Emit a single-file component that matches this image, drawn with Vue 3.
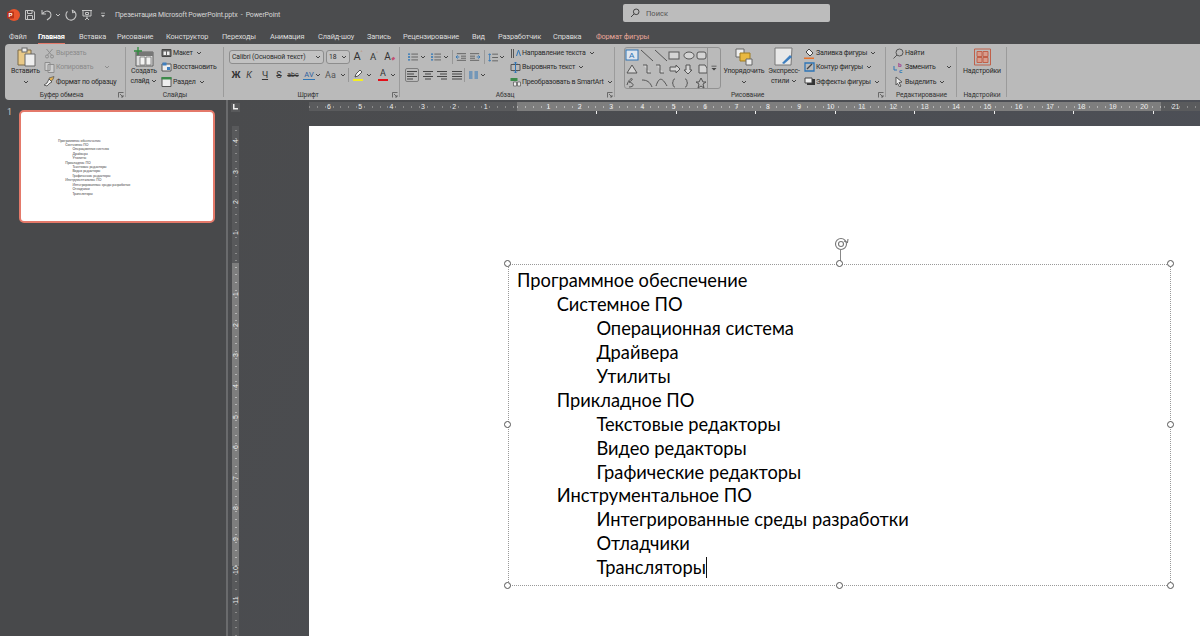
<script setup>
const tabs = [
  { t: 'Файл', w: 29 }, { t: 'Главная', w: 41, on: true }, { t: 'Вставка', w: 38 }, { t: 'Рисование', w: 49 },
  { t: 'Конструктор', w: 56 }, { t: 'Переходы', w: 48 }, { t: 'Анимация', w: 48 }, { t: 'Слайд-шоу', w: 49 },
  { t: 'Запись', w: 36 }, { t: 'Рецензирование', w: 69 }, { t: 'Вид', w: 26 }, { t: 'Разработчик', w: 55 },
  { t: 'Справка', w: 43 }, { t: 'Формат фигуры', w: 70, fmt: true }
]
const lines = [
  [0, 'Программное обеспечение'], [1, 'Системное ПО'], [2, 'Операционная система'], [2, 'Драйвера'], [2, 'Утилиты'],
  [1, 'Прикладное ПО'], [2, 'Текстовые редакторы'], [2, 'Видео редакторы'], [2, 'Графические редакторы'],
  [1, 'Инструментальное ПО'], [2, 'Интегрированные среды разработки'], [2, 'Отладчики'], [2, 'Трансляторы']
]
const hNums = []
for (let i = -6; i <= 21; i++) if (i !== 0) hNums.push({ n: Math.abs(i), x: 208 + i * 31.36 })
const tabStops = [288, 368, 447, 527, 606, 686, 765, 845]
const vNums = []
for (let i = -4; i <= 11; i++) if (i !== 0) vNums.push({ n: Math.abs(i), y: 137.5 + i * 30.6 })
const handles = [
  [0, 0], [50, 0], [100, 0], [0, 50], [100, 50], [0, 100], [50, 100], [100, 100]
]
const pct = v => v + '%'
</script>

<template>
  <div class="app">
    <header class="title">
      <svg class="qa logo" width="14" height="14" viewBox="0 0 14 14"><circle cx="8" cy="7" r="6" fill="#e8552d"/><rect x="1" y="3.5" width="7" height="7" rx="1" fill="#b7321a"/><text x="2.6" y="9.3" font-size="6" font-weight="700" fill="#fff" font-family="Liberation Sans">P</text></svg>
      <svg class="qa" width="12" height="12" viewBox="0 0 12 12" fill="none" stroke="#c4c4c4"><path d="M1.5 1.5h7.5l1.5 1.5v7.5h-9z M3.5 1.5v3h4.5v-3 M3.5 10.5v-4h5v4"/></svg>
      <svg class="qa" width="13" height="12" viewBox="0 0 13 12" fill="none" stroke="#c4c4c4" stroke-width="1.1"><path d="M2 1v4h4 M2.3 5C4 2.4 7 1.6 9 2.6c2.4 1.2 2.6 4.6.6 6.4L7 11"/></svg>
      <svg class="qa chev" width="6" height="4" viewBox="0 0 6 4" fill="none" stroke="#c4c4c4"><path d="M1 1l2 2 2-2"/></svg>
      <svg class="qa" width="12" height="12" viewBox="0 0 12 12" fill="none" stroke="#c4c4c4" stroke-width="1.1"><path d="M8 1.5A5 5 0 1 1 3 2 M8 1v3h3" transform="rotate(-8 6 6)"/></svg>
      <svg class="qa" width="12" height="12" viewBox="0 0 12 12" fill="none" stroke="#c4c4c4"><path d="M1 1.5h10 M2 1.5v5.5h8v-5.5 M6 7v2 M4 11l2-2 2 2 M4.5 3.500h3v2h-3z"/></svg>
      <svg class="qa qat" width="6" height="6" viewBox="0 0 6 6" fill="#c4c4c4"><path d="M1 .8h4v.8h-4z M1 3h4L3 5.200z"/></svg>
      <span class="doc">Презентация Microsoft PowerPoint.pptx&nbsp; -&nbsp; PowerPoint</span>
      <div class="search">
        <svg width="10" height="10" viewBox="0 0 10 10" fill="none" stroke="#444"><circle cx="6.200" cy="3.800" r="2.800"/><path d="M4.200 5.800L1 9"/></svg>
        <span>Поиск</span>
      </div>
    </header>

    <nav class="tabs">
      <span v-for="tab in tabs" :key="tab.t" class="tab" :class="{ on: tab.on, fmt: tab.fmt }" :style="{ width: tab.w + 'px' }"><i>{{ tab.t }}</i></span>
    </nav>

    <section class="ribbon">
      <!-- clipboard -->
      <div class="group g1">
        <div class="body">
          <div class="big clip">
            <svg width="20" height="20" viewBox="0 0 20 20"><path d="M2 3h13v15H2z" fill="#e9c987" stroke="#7a6a4a"/><rect x="6" y="1" width="5" height="4" fill="#eee" stroke="#666"/><path d="M9 7h10v12H9z" fill="#eee" stroke="#666"/></svg>
            <span class="bl">Вставить</span>
            <svg class="bc" width="6" height="4" viewBox="0 0 6 4" fill="none" stroke="#444"><path d="M1 1l2 2 2-2"/></svg>
          </div>
          <div class="col">
            <div class="row dis"><svg width="10" height="11" viewBox="0 0 10 11" fill="none" stroke="#8d8d8d"><path d="M2 1l5 6 M8 1L3 7"/><circle cx="2.500" cy="8.500" r="1.500"/><circle cx="7.500" cy="8.500" r="1.500"/></svg><span>Вырезать</span></div>
            <div class="row dis"><svg width="10" height="11" viewBox="0 0 10 11" fill="#cfcfcf" stroke="#8d8d8d"><path d="M.5 .5h5v8h-5z M3.500 2.500h6v8h-6z"/></svg><span>Копировать</span><svg class="ch wide" width="6" height="4" viewBox="0 0 6 4" fill="none" stroke="#8d8d8d"><path d="M1 1l2 2 2-2"/></svg></div>
            <div class="row"><svg width="11" height="11" viewBox="0 0 11 11"><path d="M5 2l5-1.500-1 3L6 6z" fill="#e3b050" stroke="#555" stroke-width=".7"/><path d="M5 3l3 3-2 1-3 3-3-1 3-2z" fill="#f2f2f2" stroke="#444" stroke-width=".8"/></svg><span>Формат по образцу</span></div>
          </div>
        </div>
        <div class="glabel lab-c">Буфер обмена<svg class="launch" width="6" height="6" viewBox="0 0 6 6" fill="none" stroke="#555" stroke-width=".8"><path d="M.5 5.500v-5h5 M2 2l3 3 M5 3v2h-2"/></svg></div>
      </div>
      <!-- slides -->
      <div class="group g2">
        <div class="body">
          <div class="big newslide">
            <svg width="20" height="20" viewBox="0 0 20 20"><path d="M2 5h17v14H2z" fill="#dedede" stroke="#5e5e5e"/><path d="M2 5h17v4H2z" fill="#777"/><path d="M6 10h5v8H6z M12 10h5v8h-5z" fill="#f2f2f2" stroke="#666" stroke-width=".7"/><path d="M4 0v8 M0 4h8" stroke="#2e8b3d" stroke-width="1.300"/></svg>
            <span class="bl">Создать</span>
            <span class="bl">слайд<svg class="ch in" width="6" height="4" viewBox="0 0 6 4" fill="none" stroke="#444"><path d="M1 1l2 2 2-2"/></svg></span>
          </div>
          <div class="col">
            <div class="row"><svg width="10" height="10" viewBox="0 0 10 10"><path d="M.5 1.500h9v7h-9z" fill="#666" stroke="#444"/><path d="M2 3.500h2.500v3.500H2z M5.500 3.500H8v3.500H5.500z" fill="#eee"/></svg><span>Макет</span><svg class="ch in" width="6" height="4" viewBox="0 0 6 4" fill="none" stroke="#444"><path d="M1 1l2 2 2-2"/></svg></div>
            <div class="row"><svg width="10" height="10" viewBox="0 0 10 10"><path d="M.5 2h9v7h-9z" fill="#eee" stroke="#555"/><path d="M1 .5h4v3H1z" fill="#3f7fbf"/><path d="M5.500 5h3v3h-3z" fill="#3f7fbf"/></svg><span>Восстановить</span></div>
            <div class="row"><svg width="10" height="10" viewBox="0 0 10 10"><path d="M.5 .5h9v9h-9z" fill="#eee" stroke="#555"/><path d="M0 0h10v2.500H0z" fill="#3c8a4a"/></svg><span>Раздел</span><svg class="ch in" width="6" height="4" viewBox="0 0 6 4" fill="none" stroke="#444"><path d="M1 1l2 2 2-2"/></svg></div>
          </div>
        </div>
        <div class="glabel">Слайды</div>
      </div>
      <!-- font -->
      <div class="group g3">
        <div class="stack">
          <div class="frow r1">
            <div class="combo fname"><span>Calibri (Основной текст)</span><svg width="6" height="4" viewBox="0 0 6 4" fill="none" stroke="#444"><path d="M1 1l2 2 2-2"/></svg></div>
            <div class="combo fsize"><span>18</span><svg width="6" height="4" viewBox="0 0 6 4" fill="none" stroke="#444"><path d="M1 1l2 2 2-2"/></svg></div>
            <b class="gl grow">A<sup>˄</sup></b>
            <b class="gl shrink">A<sup>˅</sup></b>
            <b class="gl clear">A<em class="era">◆</em></b>
          </div>
          <div class="frow r2">
            <b class="gl w-zh">Ж</b>
            <b class="gl ital w-k">К</b>
            <b class="gl und w-ch">Ч</b>
            <b class="gl str w-s">S</b>
            <b class="gl str small w-abc">abc</b>
            <b class="gl av">AV</b>
            <svg class="ch" width="6" height="4" viewBox="0 0 6 4" fill="none" stroke="#444"><path d="M1 1l2 2 2-2"/></svg>
            <b class="gl aa">Aa</b>
            <svg class="ch" width="6" height="4" viewBox="0 0 6 4" fill="none" stroke="#444"><path d="M1 1l2 2 2-2"/></svg>
            <i class="vsep sp-a"></i>
            <span class="hl hl1"><svg width="10" height="9" viewBox="0 0 10 9"><path d="M2 8l1-3 4-4 2 2-4 4z" fill="#f6f6f6" stroke="#333" stroke-width=".8"/></svg><i class="yellow"></i></span>
            <svg class="ch ml3" width="6" height="4" viewBox="0 0 6 4" fill="none" stroke="#444"><path d="M1 1l2 2 2-2"/></svg>
            <span class="hl hl2"><b class="gl fontA">A</b><i class="red"></i></span>
            <svg class="ch ml2" width="6" height="4" viewBox="0 0 6 4" fill="none" stroke="#444"><path d="M1 1l2 2 2-2"/></svg>
          </div>
        </div>
        <div class="glabel lab-f">Шрифт<svg class="launch" width="6" height="6" viewBox="0 0 6 6" fill="none" stroke="#555" stroke-width=".8"><path d="M.5 5.500v-5h5 M2 2l3 3 M5 3v2h-2"/></svg></div>
      </div>
      <!-- paragraph -->
      <div class="group g4">
        <div class="body">
          <div class="pstack">
            <div class="prow p1">
              <svg class="ml3" width="10" height="10" viewBox="0 0 12 10" stroke="#555"><path d="M4 1.500h8 M4 5h8 M4 8.500h8"/><path d="M0 1.500h2.500 M0 5h2.500 M0 8.500h2.500" stroke="#2e75b6" stroke-width="1.600"/></svg>
              <svg class="ch ml2" width="6" height="4" viewBox="0 0 6 4" fill="none" stroke="#444"><path d="M1 1l2 2 2-2"/></svg>
              <svg class="ml5" width="10" height="10" viewBox="0 0 12 10" stroke="#555"><path d="M4 1.500h8 M4 5h8 M4 8.500h8"/><path d="M0 1.500h2.500 M0 5h2.500 M0 8.500h2.500" stroke="#2e75b6" stroke-width="1.600"/></svg>
              <svg class="ch ml2" width="6" height="4" viewBox="0 0 6 4" fill="none" stroke="#444"><path d="M1 1l2 2 2-2"/></svg>
              <i class="vsep ml3"></i>
              <svg class="ml3" width="10" height="10" viewBox="0 0 12 10" stroke="#555" fill="none"><path d="M1 1h11 M6 4h6 M6 6.500h6 M1 9h11"/><path d="M4 5H0M2 3L0 5l2 2" stroke="#2e75b6"/></svg>
              <svg class="ml4" width="10" height="10" viewBox="0 0 12 10" stroke="#555" fill="none"><path d="M0 1h11 M0 4h6 M0 6.500h6 M0 9h11"/><path d="M8 5h4M10 3l2 2-2 2" stroke="#2e75b6"/></svg>
              <i class="vsep ml4"></i>
              <svg class="ml3" width="10" height="11" viewBox="0 0 12 11" stroke="#555" fill="none"><path d="M5 1.500h7 M5 5.500h7 M5 9.500h7"/><path d="M2 1v9M.5 2.500L2 1l1.500 1.500M.5 8.500L2 10l1.500-1.500" stroke="#2e75b6"/></svg>
              <svg class="ch ml1" width="6" height="4" viewBox="0 0 6 4" fill="none" stroke="#444"><path d="M1 1l2 2 2-2"/></svg>
            </div>
            <div class="prow p2">
              <span class="albox"><svg width="10" height="9" viewBox="0 0 10 9" stroke="#444"><path d="M0 .5h10M0 3h7M0 5.500h10M0 8h6"/></svg></span>
              <svg class="ml4" width="10" height="9" viewBox="0 0 10 9" stroke="#444"><path d="M0 .5h10M2 3h6M0 5.500h10M2 8h6"/></svg>
              <svg class="ml4" width="10" height="9" viewBox="0 0 10 9" stroke="#444"><path d="M0 .5h10M3 3h7M0 5.500h10M4 8h6"/></svg>
              <svg class="ml5" width="10" height="9" viewBox="0 0 10 9" stroke="#444"><path d="M0 .5h10M0 3h10M0 5.500h10M0 8h10"/></svg>
              <i class="vsep ml2"></i>
              <svg class="ml4" width="9" height="8" viewBox="0 0 9 8" stroke="#2e75b6"><path d="M0 1h3.500M0 3h3.500M0 5h3.500M0 7h3.500M5.500 1H9M5.500 3H9M5.500 5H9M5.500 7H9"/></svg>
              <svg class="ch ml2" width="6" height="4" viewBox="0 0 6 4" fill="none" stroke="#444"><path d="M1 1l2 2 2-2"/></svg>
            </div>
          </div>
          <div class="col tcol">
            <div class="row"><svg width="10" height="11" viewBox="0 0 10 11" stroke="#555" fill="none"><path d="M1 1v9 M3 1v9"/><path d="M6 8l2-6 2 6" stroke="#2e75b6"/></svg><span>Направление текста</span><svg class="ch in" width="6" height="4" viewBox="0 0 6 4" fill="none" stroke="#444"><path d="M1 1l2 2 2-2"/></svg></div>
            <div class="row"><svg width="10" height="11" viewBox="0 0 10 11" stroke="#555" fill="none"><path d="M.5 2.500h9v6h-9z"/><path d="M5 0v11M3.500 1.500L5 0l1.500 1.500M3.500 9.500L5 11l1.500-1.500" stroke="#2e75b6"/></svg><span>Выровнять текст</span><svg class="ch in" width="6" height="4" viewBox="0 0 6 4" fill="none" stroke="#444"><path d="M1 1l2 2 2-2"/></svg></div>
            <div class="row"><svg width="10" height="10" viewBox="0 0 10 10"><path d="M0 1h7v3H0z" fill="#3c8a4a"/><path d="M3 5h3v4H3zM7 5h3v4H7z" fill="#eee" stroke="#555" stroke-width=".7"/></svg><span>Преобразовать в SmartArt</span><svg class="ch in" width="6" height="4" viewBox="0 0 6 4" fill="none" stroke="#444"><path d="M1 1l2 2 2-2"/></svg></div>
          </div>
        </div>
        <div class="glabel lab-p">Абзац<svg class="launch" width="6" height="6" viewBox="0 0 6 6" fill="none" stroke="#555" stroke-width=".8"><path d="M.5 5.500v-5h5 M2 2l3 3 M5 3v2h-2"/></svg></div>
      </div>
      <!-- drawing -->
      <div class="group g5">
        <div class="body">
          <div class="gallery">
            <svg class="shapes" width="82" height="42" viewBox="0 0 82 42" fill="none" stroke="#555">
              <rect x="1" y="3" width="12" height="10" stroke="#2e75b6" fill="#dfe6ee"/><text x="4" y="11" font-size="8" stroke="none" fill="#2e75b6" font-family="Liberation Sans">A</text>
              <path d="M16 3l12 11 M30 3l12 11"/><rect x="44" y="5" width="10" height="7" fill="#d4d4d4"/><ellipse cx="64" cy="8.500" rx="5" ry="3.500" fill="#d4d4d4"/><rect x="72" y="5" width="9" height="7" rx="2" fill="#d4d4d4"/>
              <path d="M2 26l5-8 5 8zM18 18h4v8h4 M31 18h4v8h4 M45 20h6v-2l4 4-4 4v-2h-6zM61 18h4v5h2l-4 4-4-4h2zM74 18h6l2 3v5h-8z" fill="#d4d4d4"/>
              <path d="M2 38c3-10 9-6 2-3 5 1 6 5 0 5 M17 33c5 0 8 2 10 7 M31 39c3-9 6-9 11 0 M50 32c-3 0-1 4-3 4 2 0 0 4 3 4 M60 32c3 0 1 4 3 4-2 0-0 4-3 4 M76 31l2 4h3l-3 2 1 4-3-2-3 2 1-4-3-2h3z"/>
            </svg>
            <div class="more"><svg width="6" height="6" viewBox="0 0 6 6" fill="#444"><path d="M.5 .8h5v.8h-5z M.5 3h5L3 5.400z"/></svg></div>
          </div>
          <div class="big arrange">
            <svg width="18" height="18" viewBox="0 0 18 18"><path d="M1 1h8v8H1z" fill="#eee" stroke="#666"/><path d="M5 5h10v8H5z" fill="#e8b840" stroke="#a07c20"/><path d="M11 11h6v6h-6z" fill="#eee" stroke="#666"/></svg>
            <span class="bl">Упорядочить</span>
            <svg class="bc" width="6" height="4" viewBox="0 0 6 4" fill="none" stroke="#444"><path d="M1 1l2 2 2-2"/></svg>
          </div>
          <div class="big express">
            <svg width="20" height="20" viewBox="0 0 20 20"><path d="M1 1h17l-1 17H1z" fill="#e8e8e8" stroke="#777"/><path d="M8 16l8-8 2 2-8 7z" fill="#3f7fbf"/></svg>
            <span class="bl">Экспресс-</span>
            <span class="bl">стили<svg class="ch in" width="6" height="4" viewBox="0 0 6 4" fill="none" stroke="#444"><path d="M1 1l2 2 2-2"/></svg></span>
          </div>
          <div class="col shapecol">
            <div class="row"><svg width="11" height="11" viewBox="0 0 11 11"><path d="M5 1l4 4-3 3-4-4z" fill="#eee" stroke="#444"/><path d="M0 9.500h10v1.500H0z" fill="#e8732c"/></svg><span>Заливка фигуры</span><svg class="ch in" width="6" height="4" viewBox="0 0 6 4" fill="none" stroke="#444"><path d="M1 1l2 2 2-2"/></svg></div>
            <div class="row"><svg width="11" height="11" viewBox="0 0 11 11" fill="none"><path d="M1 1h9v8H1z" stroke="#2e75b6" stroke-width="1.300"/><path d="M3 7l5-5" stroke="#444" stroke-width="1.300"/></svg><span>Контур фигуры</span><svg class="ch in" width="6" height="4" viewBox="0 0 6 4" fill="none" stroke="#444"><path d="M1 1l2 2 2-2"/></svg></div>
            <div class="row"><svg width="11" height="11" viewBox="0 0 11 11"><path d="M3 3h8v6H3z" fill="#333"/><path d="M1 2h7v5H1z" fill="#eee" stroke="#444"/></svg><span>Эффекты фигуры</span><svg class="ch in" width="6" height="4" viewBox="0 0 6 4" fill="none" stroke="#444"><path d="M1 1l2 2 2-2"/></svg></div>
          </div>
        </div>
        <div class="glabel lab-d">Рисование<svg class="launch" width="6" height="6" viewBox="0 0 6 6" fill="none" stroke="#555" stroke-width=".8"><path d="M.5 5.500v-5h5 M2 2l3 3 M5 3v2h-2"/></svg></div>
      </div>
      <!-- editing -->
      <div class="group g6">
        <div class="body">
          <div class="col editcol">
            <div class="row"><svg width="11" height="11" viewBox="0 0 11 11" fill="none" stroke="#555"><circle cx="6.500" cy="4.500" r="3.500"/><path d="M4 7L.5 10.500"/></svg><span>Найти</span></div>
            <div class="row"><svg width="11" height="12" viewBox="0 0 11 12"><text x="5" y="6" font-size="6" fill="#9b2f8a" font-family="Liberation Sans" font-weight="700">b</text><text x="6" y="11.500" font-size="6" fill="#2e75b6" font-family="Liberation Sans" font-weight="700">c</text><path d="M1 5v4h3" fill="none" stroke="#2e75b6"/></svg><span>Заменить</span><svg class="ch ml9" width="6" height="4" viewBox="0 0 6 4" fill="none" stroke="#444"><path d="M1 1l2 2 2-2"/></svg></div>
            <div class="row"><svg width="11" height="11" viewBox="0 0 11 11" fill="#eee" stroke="#555"><path d="M3 1l6 5-3 .5 2 3.500-1.500 .8-2-3.500L3 9z"/></svg><span>Выделить</span><svg class="ch in" width="6" height="4" viewBox="0 0 6 4" fill="none" stroke="#444"><path d="M1 1l2 2 2-2"/></svg></div>
          </div>
        </div>
        <div class="glabel">Редактирование</div>
      </div>
      <!-- add-ins -->
      <div class="group g7">
        <div class="body center">
          <div class="big addins">
            <svg width="17" height="17" viewBox="0 0 17 17" fill="none" stroke="#c0604a"><path d="M.5 .5h16v16H.5z"/><path d="M3 3h5v5H3zM9 3h5v5H9zM3 9h5v5H3zM9 9h5v5H9z" fill="#d99c8c"/></svg>
            <span class="bl">Надстройки</span>
          </div>
        </div>
        <div class="glabel">Надстройки</div>
      </div>
    </section>

    <main class="work">
      <aside class="thumbs">
        <span class="num">1</span>
        <div class="thumb">
          <p v-for="(l, i) in lines" :key="i" :style="{ paddingLeft: l[0] * 7.200 + 'px' }">{{ l[1] }}</p>
        </div>
      </aside>
      <div class="split"></div>
      <div class="editor">
        <div class="corner"><svg width="9" height="8" viewBox="0 0 9 8" fill="#eee"><path d="M2 1h1.500v4H7v1.500H2z"/></svg></div>
        <div class="hruler">
          <div class="hlight"></div>
          <span v-for="n in hNums" :key="n.x" class="hn" :style="{ left: n.x + 'px' }">{{ n.n }}</span>
          <i v-for="t in tabStops" :key="t" class="stop" :style="{ left: t + 'px' }"></i>
        </div>
        <div class="vruler">
          <div class="vlight"></div>
          <span v-for="n in vNums" :key="n.y" class="vn" :style="{ top: n.y + 'px' }">{{ n.n }}</span>
        </div>
        <div class="slide">
          <div class="box">
            <svg class="rot" width="16" height="16" viewBox="0 0 16 16" fill="none" stroke="#777" stroke-width="1.100"><circle cx="8" cy="8" r="5.500"/><circle cx="8" cy="8" r="2.500"/><path d="M11 5l3.500 1.500L15 3"/></svg>
            <i class="stem"></i>
            <i v-for="(h, i) in handles" :key="i" class="handle" :style="{ left: pct(h[0]), top: pct(h[1]) }"></i>
            <p v-for="(l, i) in lines" :key="i" class="line" :style="{ paddingLeft: l[0] * 39.700 + 'px' }">{{ l[1] }}<i v-if="i === lines.length - 1" class="caret"></i></p>
          </div>
        </div>
      </div>
    </main>
  </div>
</template>

<style>
html, body { margin: 0; background: #4a4b4d; overflow: hidden; }
</style>

<style scoped>
.app { width: 1200px; height: 636px; display: flex; flex-direction: column; background: #4b4c4e; font-family: Roboto, "Noto Sans", sans-serif; overflow: hidden; }
p { margin: 0; }
i { font-style: normal; }
.title { height: 30px; flex: none; display: flex; align-items: center; position: relative; box-sizing: border-box; }
.qa { flex: none; margin-left: 4px; }
.logo { margin-left: 6px; }
.chev { margin-left: 2px; }
.qat { margin-left: 7px; }
.doc { margin-left: 9px; font-size: 7px; letter-spacing: -0.15px; color: #d6d6d6; white-space: nowrap; }
.search { position: absolute; left: 623px; top: 4px; width: 207px; height: 18px; box-sizing: border-box; background: #bcbcbc; border-radius: 2px; display: flex; align-items: center; padding-left: 7px; gap: 6px; font-size: 7.500px; color: #555; }
.tabs { height: 14px; flex: none; display: flex; padding-left: 9px; }
.tab { flex: none; font-size: 7.400px; letter-spacing: -0.15px; line-height: 13px; color: #dcdcdc; white-space: nowrap; }
.tab i { display: inline-block; }
.tab.on { color: #fff; font-weight: 700; }
.tab.on i { border-bottom: 1px solid #e4796a; line-height: 12px; }
.tab.fmt { color: #e8a79a; }
.ribbon { height: 56px; flex: none; margin-left: 5px; background: #bababa; border-radius: 4px 0 0 4px; display: flex; color: #2a2a2a; font-size: 7px; letter-spacing: -0.2px; overflow: hidden; }
.group { flex: none; box-sizing: border-box; display: flex; flex-direction: column; position: relative; padding-top: 2px; }
.group::after { content: ""; position: absolute; right: 0; top: 3px; bottom: 3px; width: 1px; background: #9b9b9b; }
.g1 { width: 121px; } .g2 { width: 98px; } .g3 { width: 176px; } .g4 { width: 215px; } .g5 { width: 271px; } .g6 { width: 71px; } .g7 { width: 50px; }
.body { flex: 1; display: flex; min-height: 0; }
.center { justify-content: center; }
.glabel { height: 11px; line-height: 12px; text-align: center; font-size: 6.700px; letter-spacing: -0.1px; color: #333; position: relative; white-space: nowrap; flex: none; box-sizing: border-box; }
.lab-c { padding-right: 8px; }
.lab-f { padding-right: 8px; }
.lab-p { padding-right: 5px; }
.lab-d { padding-right: 6px; }
.launch { position: absolute; right: 2px; top: 3px; }
.big { display: flex; flex-direction: column; align-items: center; flex: none; white-space: nowrap; line-height: 9.500px; }
.big > svg:first-child { margin: 1px 0 0; height: 20px; }
.clip { width: 37px; margin-left: 2px; }
.newslide { width: 34px; margin-left: 1px; }
.arrange { width: 44px; margin-left: 1px; }
.express { width: 34px; margin-left: 1px; }
.addins { width: 50px; }
.bl { display: block; }
.bc { margin-top: 3px; }
.col { display: flex; flex-direction: column; }
.tcol { margin-left: 5px; }
.shapecol { margin-left: 3px; }
.editcol { margin-left: 7px; }
.row { display: flex; align-items: center; height: 14.500px; gap: 1px; white-space: nowrap; }
.row > svg:first-child { flex: none; width: 11px; }
.dis { color: #8a8a8a; }
.ch { flex: none; }
.in { margin-left: 2px; }
.wide { margin-left: 10px; }
.ml1 { margin-left: 1px; } .ml2 { margin-left: 2px; } .ml3 { margin-left: 3px; } .ml4 { margin-left: 4px; } .ml5 { margin-left: 5px; } .ml9 { margin-left: 9px; }
.stack { flex: 1; padding-left: 5px; }
.frow { display: flex; align-items: center; }
.r1 { height: 17px; margin-top: 2px; }
.r2 { height: 17px; margin-top: 1.500px; }
.combo { box-sizing: border-box; height: 14px; border: 1px solid #8d8d8d; border-radius: 3px; background: #c2c2c2; display: flex; align-items: center; justify-content: space-between; padding: 0 2px; font-size: 6.800px; letter-spacing: -0.1px; white-space: nowrap; overflow: hidden; flex: none; }
.fname { width: 95px; }
.fsize { width: 24px; margin-left: 2px; }
.gl { display: inline-block; text-align: center; font-weight: 400; font-size: 9px; color: #333; flex: none; font-style: normal; letter-spacing: 0; }
.gl sup { font-size: 6px; color: #c06030; line-height: 0; }
.grow { width: 16px; font-size: 11px; }
.shrink { width: 16px; font-size: 9.500px; }
.clear { width: 15px; font-size: 10px; }
.w-zh { width: 14px; font-weight: 700; } .w-k { width: 12px; } .w-ch { width: 20px; } .w-s { width: 8px; } .w-abc { width: 20px; }
.era { font-size: 5px; color: #c05070; }
.ital { font-style: italic; }
.und { text-decoration: underline; }
.str { text-decoration: line-through; }
.small { font-size: 7px; }
.av { width: 12px; font-size: 7.500px; color: #2e5f9e; border-bottom: 1px solid #2e75b6; line-height: 9px; }
.aa { width: 19px; color: #555; }
.vsep { width: 1px; height: 14px; background: #989898; flex: none; display: block; }
.sp-a { margin-left: 2px; }
.hl { display: flex; flex-direction: column; align-items: center; width: 10px; flex: none; }
.hl i { display: block; width: 10px; height: 2px; margin-top: 1px; }
.hl1 { margin-left: 4px; }
.hl2 { margin-left: 6px; }
.yellow { background: #f4ef20; }
.red { background: #e3101a; }
.fontA { font-size: 9px; height: 9px; line-height: 9px; }
.pstack { width: 100px; margin-left: 5px; flex: none; }
.prow { display: flex; align-items: center; height: 13px; }
.p1 { margin-top: 4.500px; }
.p2 { margin-top: 5px; }
.albox { box-sizing: border-box; width: 14px; height: 14px; border: 1px solid #7d7d7d; border-radius: 2px; display: flex; align-items: center; justify-content: center; flex: none; }
.gallery { margin-left: 9px; margin-top: 1px; width: 97px; height: 42px; box-sizing: border-box; border: 1px solid #929292; border-radius: 3px; display: flex; flex: none; }
.shapes { flex: none; margin-top: -1px; width: 82px; }
.more { flex: 1; border-left: 1px solid #929292; display: flex; align-items: center; justify-content: center; }
.work { flex: 1; display: flex; min-height: 0; }
.thumbs { width: 226px; flex: none; position: relative; padding: 10px 0 0 19px; box-sizing: border-box; background: #48494b; }
.num { position: absolute; left: 7px; top: 7px; color: #c6c6c6; font-size: 9px; }
.thumb { width: 196px; height: 113px; box-sizing: border-box; background: #fff; border: 2px solid #e4796a; border-radius: 5px; padding: 26.500px 0 0 37px; }
.thumb p { font-family: Lato, "Noto Sans", sans-serif; font-size: 3.400px; line-height: 4.420px; color: #444; white-space: nowrap; }
.split { width: 2px; flex: none; background: #6a6b6d; }
.editor { flex: 1; position: relative; background: linear-gradient(115deg, #4a4b4d, #4d5058); display: grid; grid-template-rows: 26px 1fr; grid-template-columns: 81px 1fr; min-width: 0; }
.corner { position: absolute; left: 3px; top: 3px; width: 9px; height: 9px; background: #58595b; display: flex; }
.hruler { grid-column: 2; grid-row: 1; position: relative; height: 9px; margin-top: 2px; background-color: #5a5b5d; background-image: repeating-linear-gradient(90deg, #8c8c8c 0 1px, transparent 1px 7.840px); background-size: 100% 2px; background-position: 0 50%; background-repeat: no-repeat; }
.hlight { position: absolute; left: 208px; width: 644px; top: 0; bottom: 0; background-color: #7e7e7e; background-image: repeating-linear-gradient(90deg, #b4b4b4 0 1px, transparent 1px 7.840px); background-size: 100% 2px; background-position: 0 50%; background-repeat: no-repeat; }
.hn { position: absolute; top: 0; width: 10px; margin-left: -5px; text-align: center; color: #ececec; font-size: 7px; line-height: 9px; font-family: "Liberation Sans", sans-serif; }
.stop { position: absolute; top: 9px; width: 1px; height: 3px; margin-left: -1px; background: #eee; }
.vruler { position: absolute; left: 4px; top: 26px; bottom: 0; width: 7px; background-color: #58595b; background-image: repeating-linear-gradient(0deg, #8c8c8c 0 1px, transparent 1px 7.650px); background-size: 2px 100%; background-position: 50% 0; background-repeat: no-repeat; }
.vlight { position: absolute; left: 0; right: 0; top: 137px; height: 303px; background-color: #7e7e7e; background-image: repeating-linear-gradient(0deg, #b4b4b4 0 1px, transparent 1px 7.650px); background-size: 2px 100%; background-position: 50% 0; background-repeat: no-repeat; }
.vn { position: absolute; left: -1.500px; width: 10px; height: 10px; margin-top: -5px; text-align: center; color: #ececec; font-size: 7px; line-height: 10px; transform: rotate(-90deg); font-family: "Liberation Sans", sans-serif; }
.slide { grid-column: 2; grid-row: 2; background: #fff; padding: 138px 0 0 199px; min-height: 0; }
.box { width: 663px; height: 322px; box-sizing: border-box; outline: 1px dotted #999; outline-offset: -1px; position: relative; padding: 5px 0 0 9px; }
.line { font-family: Lato, "Noto Sans", sans-serif; font-size: 18.300px; line-height: 23.930px; color: #000; white-space: nowrap; }
.caret { display: inline-block; width: 1px; height: 21px; background: #111; vertical-align: -4px; }
.handle { position: absolute; width: 5px; height: 5px; margin: -4px 0 0 -4px; border: 1px solid #555; border-radius: 50%; background: #fff; }
.stem { position: absolute; left: 50%; top: -14px; width: 1px; height: 14px; background: #888; }
.rot { position: absolute; left: calc(50% - 7px); top: -28px; }
</style>
